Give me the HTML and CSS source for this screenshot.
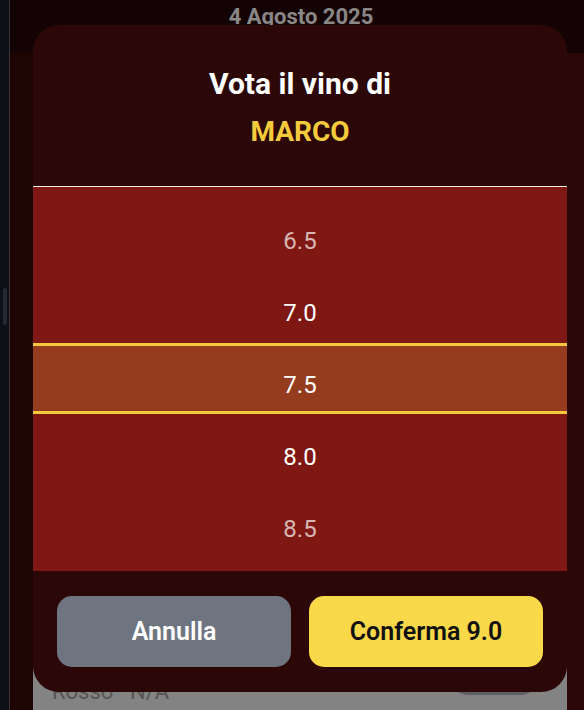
FILE: index.html
```html
<!DOCTYPE html>
<html lang="it">
<head>
<meta charset="utf-8">
<title>Vota il vino</title>
<link rel="stylesheet" href="styles.css">
</head>
<body>
<div class="app">
  <aside class="rail"><div class="thumb"></div></aside>
  <main class="main">
    <div class="date">4 Agosto 2025</div>
    <section class="content">
      <div class="card">
        <span class="card-text">Rosso · N/A</span>
        <span class="card-pill"></span>
      </div>
    </section>

    <div class="modal">
      <header class="modal-head">
        <h1 class="title">Vota il vino di</h1>
        <div class="name">MARCO</div>
      </header>
      <div class="picker">
        <div class="band"></div>
        <div class="item faded">6.5</div>
        <div class="item">7.0</div>
        <div class="item">7.5</div>
        <div class="item">8.0</div>
        <div class="item faded">8.5</div>
      </div>
      <footer class="modal-foot">
        <button class="btn btn-cancel">Annulla</button>
        <button class="btn btn-ok">Conferma 9.0</button>
      </footer>
    </div>
  </main>
</div>
</body>
</html>
```

FILE: styles.css
```css
* { box-sizing: border-box; }
html, body { margin: 0; padding: 0; }
body {
  width: 584px;
  height: 710px;
  overflow: hidden;
  background: #140304;
  font-family: Roboto, "Liberation Sans", sans-serif;
}
.app {
  display: flex;
  height: 710px;
}
.rail {
  width: 10px;
  flex: none;
  background: #0d1117;
  border-right: 1px solid #3a3535;
  position: relative;
}
.thumb {
  position: absolute;
  left: 3px;
  top: 288px;
  width: 4px;
  height: 37px;
  border-radius: 2px;
  background: #242a33;
}
.main {
  flex: 1;
  position: relative;
  display: flex;
  flex-direction: column;
}
.date {
  height: 53px;
  flex: none;
  text-align: center;
  color: #8a8787;
  font-weight: 700;
  font-size: 22px;
  line-height: 34px;
  padding-left: 8px;
}
.content {
  flex: 1;
  padding: 597px 17px 0 23px;
  background: linear-gradient(to right, #1f0404 0, #1f0404 557px, #2c0707 557px);
}
.card {
  height: 80px;
  background: #838383;
  border-radius: 20px;
  padding: 5px 27px 0 19px;
  display: flex;
  justify-content: space-between;
  align-items: flex-start;
}
.card-text {
  color: #555;
  font-size: 22px;
  line-height: 26px;
  margin-top: 24px;
}
.card-pill {
  width: 91px;
  height: 40px;
  border-radius: 20px;
  background: #5e5e66;
}

.modal {
  position: absolute;
  left: 23px;
  top: 25px;
  width: 534px;
  height: 667px;
  background: #2c0707;
  border-radius: 26px;
  display: flex;
  flex-direction: column;
  overflow: hidden;
}
.modal-head {
  height: 162px;
  flex: none;
  border-bottom: 1px solid #f4eeee;
  text-align: center;
  padding-top: 41px;
}
.title {
  margin: 0;
  color: #fff;
  font-weight: 700;
  font-size: 30px;
  line-height: 36px;
}
.name {
  margin-top: 14px;
  color: #f5cb3e;
  font-weight: 700;
  font-size: 28px;
  line-height: 32px;
}
.picker {
  position: relative;
  height: 384px;
  flex: none;
  background: #7f1812;
  padding-top: 18px;
}
.band {
  position: absolute;
  left: 0;
  right: 0;
  top: 156px;
  height: 71px;
  background: #963c1e;
  border-top: 3px solid #f3c93f;
  border-bottom: 3px solid #f3c93f;
}
.item {
  position: relative;
  height: 72px;
  line-height: 72px;
  text-align: center;
  color: #fff;
  font-size: 24px;
}
.item.faded { color: rgba(255,255,255,0.7); }
.modal-foot {
  flex: 1;
  display: flex;
  gap: 18px;
  padding: 25px 24px 25px;
}
.btn {
  flex: 1;
  border: 0;
  border-radius: 15px;
  font-family: Roboto, "Liberation Sans", sans-serif;
  font-weight: 600;
  font-size: 25px;
}
.btn-cancel { background: #6e7480; color: #fff; }
.btn-ok { background: #f9d849; color: #111; }
```
